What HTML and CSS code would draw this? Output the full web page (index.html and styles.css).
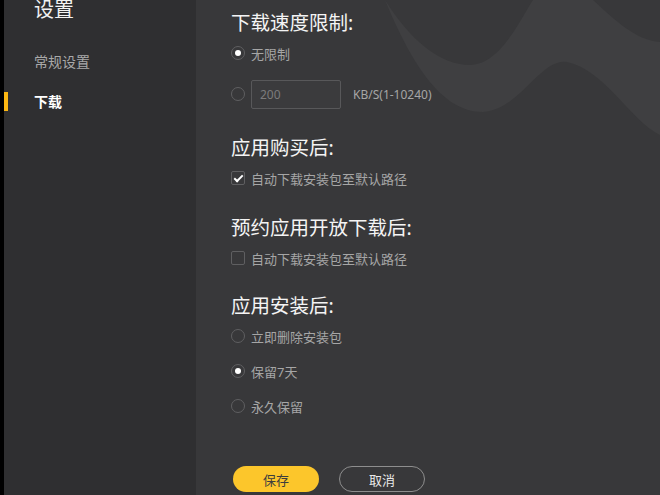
FILE: index.html
```html
<!DOCTYPE html>
<html>
<head>
<title>设置</title>
<link rel="stylesheet" href="styles.css">
</head>
<body>
<div class="side">
    <div class="side-title">设置</div>
    <div class="nav">常规设置</div>
    <div class="nav active">下载</div>
</div>
<div class="main">
    <svg class="wave" width="280" height="150" viewBox="0 0 280 150">
        <path d="M 5 0 C 30 40, 60 65, 90 65 C 120 65, 140 20, 153 0 L 213 0 C 235 20, 255 40, 280 42 L 280 135 C 250 120, 225 70, 187 62 C 160 58, 140 110, 103 112 C 60 112, 30 60, 5 0 Z" fill="#3f3f41"/>
    </svg>

    <div class="section first">
        <div class="title">下载速度限制:</div>
        <div class="opt"><span class="radio on"></span>无限制</div>
        <div class="opt opt-input">
            <span class="radio"></span>
            <input type="text" class="speed" value="200">
            <span class="unit">KB/S(1-10240)</span>
        </div>
    </div>

    <div class="section second">
        <div class="title">应用购买后:</div>
        <div class="opt"><span class="check on"></span>自动下载安装包至默认路径</div>
    </div>

    <div class="section">
        <div class="title">预约应用开放下载后:</div>
        <div class="opt"><span class="check"></span>自动下载安装包至默认路径</div>
    </div>

    <div class="section last">
        <div class="title">应用安装后:</div>
        <div class="opt"><span class="radio"></span>立即删除安装包</div>
        <div class="opt gap"><span class="radio on"></span>保留7天</div>
        <div class="opt gap"><span class="radio"></span>永久保留</div>
    </div>

    <div class="actions">
        <button class="btn save">保存</button>
        <button class="btn cancel">取消</button>
    </div>
</div>
</body>
</html>
```

FILE: styles.css
```css
body {
    margin: 0;
    height: 495px;
    display: flex;
    overflow: hidden;
    font-family: "Noto Sans", "Noto Sans CJK SC", sans-serif;
    background-color: #38383a;
}

.side {
    border-left: 4px solid #000;
    padding-left: 30px;
    box-sizing: border-box;
    width: 196px;
    background-color: #2f2f31;
}

.side-title {
    font-size: 20px;
    line-height: 20px;
    color: #f2f2f2;
    margin-bottom: 22px;
}

.nav {
    position: relative;
    font-size: 14px;
    line-height: 40px;
    height: 40px;
    color: #a9a9a9;
}

.nav.active {
    color: #fff;
    font-weight: bold;
}

.nav.active::before {
    content: "";
    position: absolute;
    left: -30px;
    top: 10px;
    width: 4px;
    height: 19px;
    background-color: #fdb813;
}

.main {
    flex: 1;
    position: relative;
    padding: 8px 0 0 35px;
}

.wave {
    position: absolute;
    top: 0;
    right: 0;
}

.section {
    position: relative;
    margin-top: 20px;
}

.section.first {
    margin-top: 0;
}

.section.second {
    margin-top: 24px;
}

.section.last {
    margin-top: 18px;
}

.title {
    font-size: 19.5px;
    line-height: 30px;
    color: #f4f4f4;
}

.opt {
    display: flex;
    align-items: center;
    height: 30px;
    font-size: 13px;
    color: #a6a6a6;
}

.opt.gap {
    margin-top: 5px;
}

.opt-input {
    margin-top: 11px;
    margin-bottom: 4px;
}

.radio {
    width: 12px;
    height: 12px;
    border: 1px solid #5f5f61;
    border-radius: 50%;
    margin-right: 6px;
    position: relative;
    box-sizing: content-box;
}

.radio.on::after {
    content: "";
    position: absolute;
    left: 3px;
    top: 3px;
    width: 6px;
    height: 6px;
    border-radius: 50%;
    background-color: #fff;
}

.check {
    width: 12px;
    height: 12px;
    border: 1px solid #5f5f61;
    border-radius: 2px;
    margin-right: 6px;
    position: relative;
}

.check.on::after {
    content: "";
    position: absolute;
    left: 4px;
    top: 1px;
    width: 3px;
    height: 7px;
    border: solid #fff;
    border-width: 0 2px 2px 0;
    transform: rotate(45deg);
}

.speed {
    width: 90px;
    height: 29px;
    box-sizing: border-box;
    border: 1px solid #58585a;
    border-radius: 2px;
    background-color: #3b3b3d;
    color: #7c7c7c;
    font-family: inherit;
    font-size: 12px;
    padding: 0 8px;
    margin-right: 12px;
    outline: none;
}

.unit {
    font-size: 12px;
    color: #a6a6a6;
}

.actions {
    position: relative;
    display: flex;
    gap: 20px;
    margin: 45px 0 0 2px;
}

.btn {
    width: 86px;
    height: 26px;
    border-radius: 13px;
    font-family: inherit;
    font-size: 13px;
    cursor: pointer;
}

.save {
    border: none;
    background-color: #fcc62b;
    color: #3d3d3d;
}

.cancel {
    border: 1px solid #8e8e8e;
    background-color: transparent;
    color: #e8e8e8;
}
```
